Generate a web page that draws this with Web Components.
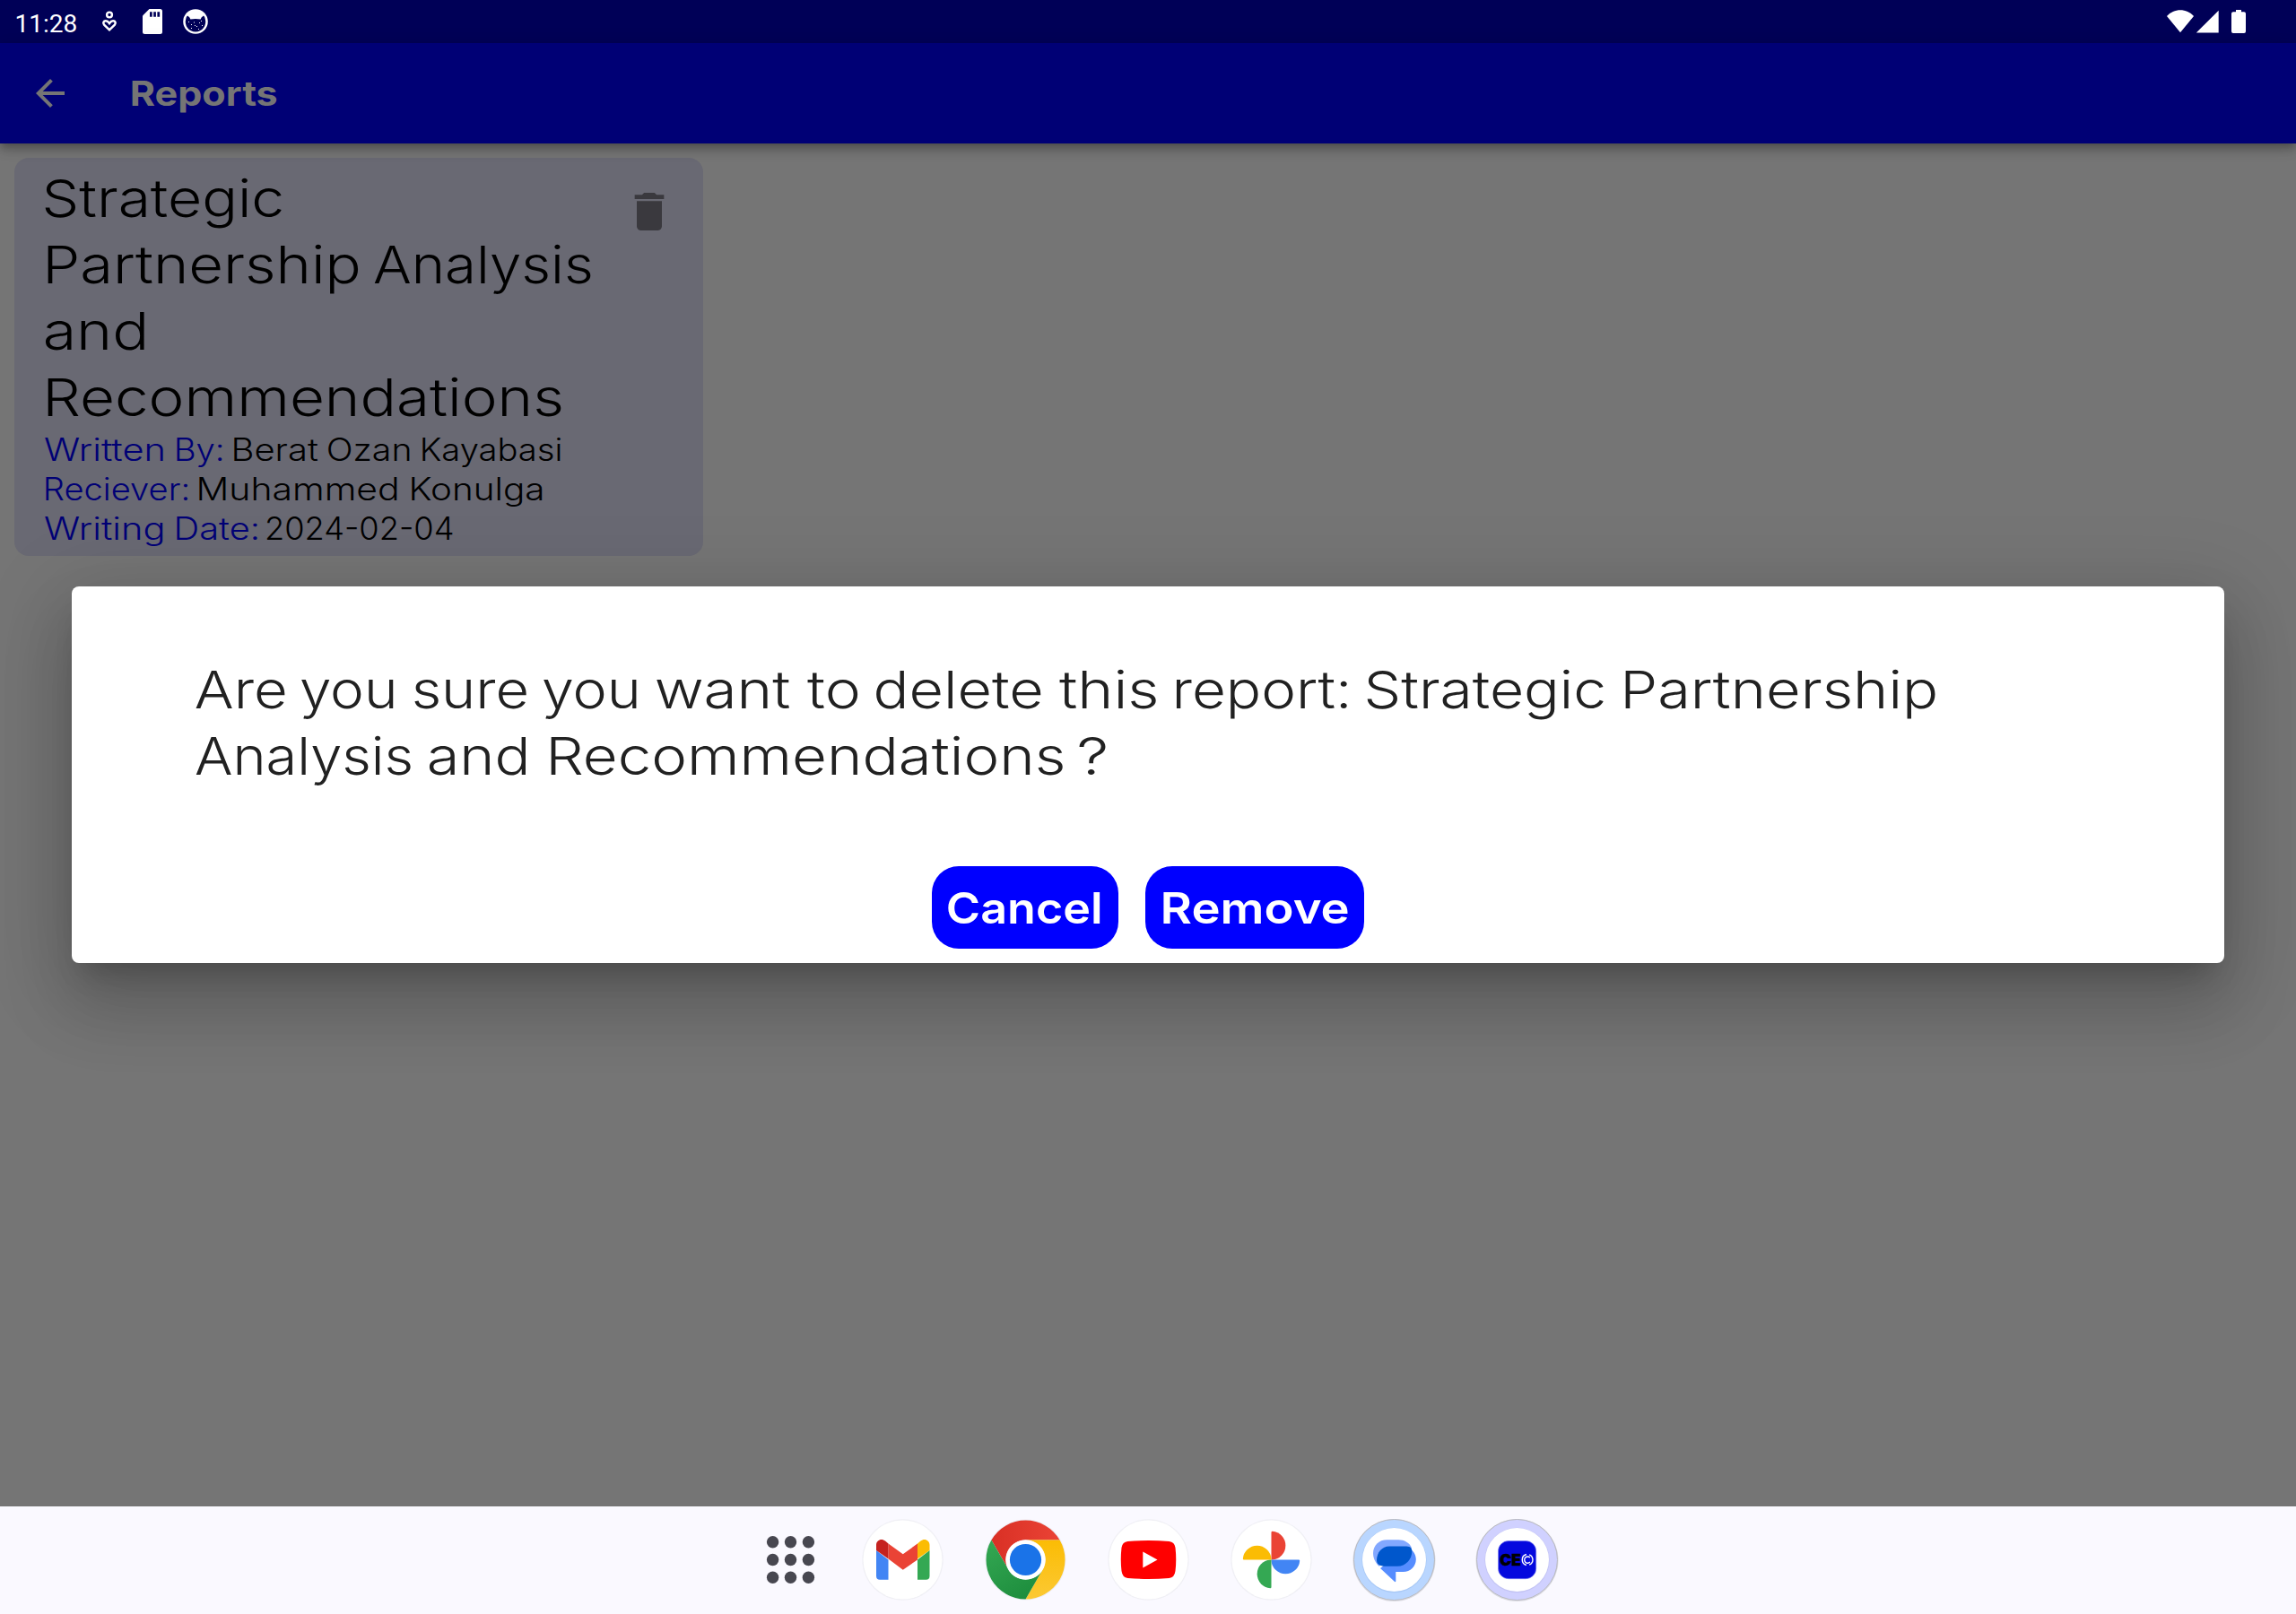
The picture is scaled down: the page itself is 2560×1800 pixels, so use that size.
<!DOCTYPE html>
<html lang="en">
<head>
<meta charset="utf-8">
<title>Reports</title>
<style>
html,body{margin:0;padding:0;width:2560px;height:1800px;overflow:hidden;background:#757575}
</style>
</head>
<body>
<tablet-screen></tablet-screen>
<script>
const define=(name,html,setup)=>customElements.define(name,class extends HTMLElement{
  constructor(){super();this.attachShadow({mode:'open'}).innerHTML=html;}
  connectedCallback(){if(setup)setup(this,this.shadowRoot);}
});

/* A line of words; each word is stretched to its own start and end offset. */
const ctx=document.createElement('canvas').getContext('2d');
customElements.define('fit-line',class extends HTMLElement{
  connectedCallback(){
    const root=this.shadowRoot||this.attachShadow({mode:'open'});
    const a=n=>this.getAttribute(n);
    const size=+a('size'),weight=a('weight')||400,height=+a('height'),shift=+(a('shift')||0);
    const words=a('text').split(' '),labels=+(a('labels')||0);
    const e=a('edges').split(' ').map((v,i)=>i%2?v-.4:v-1);
    ctx.font=`${weight} ${size}px Inter`;
    let out=`<style>:host{display:flex;height:${height}px;font:${weight} ${size}px/${height}px Inter,sans-serif;padding-left:${e[0]}px;box-sizing:border-box}
    .w{display:block;flex:none;white-space:pre}.t{display:inline-block;transform-origin:0 0}.s{font-size:0}.label{color:var(--label)}</style>`;
    words.forEach((w,i)=>{
      const L=e[2*i],R=e[2*i+1],m=ctx.measureText(w);
      const s=(R-L)/(m.actualBoundingBoxRight+m.actualBoundingBoxLeft);
      const last=i===words.length-1,next=last?R:e[2*i+2];
      out+=`<span class="w${i<labels?' label':''}" style="width:${(next-L).toFixed(2)}px"><span class="t" style="transform:translate(${(s*m.actualBoundingBoxLeft).toFixed(2)}px,${shift}px) scaleX(${s.toFixed(4)})">${w}</span>${last?'':'<span class="s"> </span>'}</span>`;
    });
    root.innerHTML=out;
  }
});

define('status-bar',`<style>
:host{display:flex;height:48px;background:#000057;color:#fff;align-items:center;box-sizing:border-box;justify-content:space-between}
svg{display:block}
.l{display:flex;align-items:center;padding-left:16.5px}
.time{font:400 28px/48px Roboto,sans-serif;width:91.500px;padding-top:3px;height:45px}
</style>
<div class="l"><span class="time">11:28</span>
<svg width="130" height="48" viewBox="108 0 130 48">
 <circle cx="122" cy="16.500" r="2.900" fill="none" stroke="#fff" stroke-width="2.400"/>
 <path d="M122 33.300l-5.900-5.600c-1.700-1.900-.6-4.500 1.800-4.500 1.700 0 2.900 1.100 4.100 2.800 1.200-1.700 2.400-2.800 4.100-2.800 2.400 0 3.500 2.600 1.800 4.500z" fill="none" stroke="#fff" stroke-width="2.500"/>
 <path d="M166.500 10H178.500a2.500 2.500 0 0 1 2.500 2.500V35.500a2.500 2.500 0 0 1-2.500 2.500H161.500a2.500 2.500 0 0 1-2.500-2.500V17.500z" fill="#fff"/>
 <path d="M167 13.300h2.700v5.400h-2.700zM171.200 13.300h2.700v5.400h-2.700zM175.400 13.300h2.700v5.400h-2.700z" fill="#000057"/>
 <circle cx="218" cy="24" r="13.800" fill="#fff"/>
 <path d="M207.300 21q.2-2.500 1.700-3.600 2.800 1.500 3.400 4 5.500-1 11.200 0 .6-2.500 3.400-4 1.500 1.100 1.700 3.600a11.200 11.200 0 1 1-21.400 0z" fill="#000057"/>
 <path d="M210 24h1v1h-1zM213 27h1v1h-1zM216 24.500h1v1h-1zM219 29h1v1h-1zM222 25h1v1h-1zM225 28h1v1h-1zM213 31h1v1h-1zM221 32h1v1h-1zM217 28h1v1h-1zM224 23h1v1h-1z" fill="#fff"/>
</svg></div>
<svg width="150" height="48" viewBox="2410 0 150 48" fill="#fff">
 <path d="M2431 36.300L2416 18.100c7.800-9 22.200-9 30 0z"/><path d="M2448.800 36.600L2473.700 11.800V36.600z"/>
 <path d="M2493 11h6v2.200h3q2 0 2 2V35q0 2-2 2h-12q-2 0-2-2V15.200q0-2 2-2h3z"/>
</svg>`);

define('app-bar',`<style>
:host{display:flex;height:112px;background:#000075;color:#757575;align-items:center;box-sizing:border-box;padding-left:32px;z-index:1;
box-shadow:0 4px 8px -2px rgba(0,0,0,.2),0 8px 10px 0 rgba(0,0,0,.14),0 2px 20px 0 rgba(0,0,0,.12)}
svg{display:block;flex:none}fit-line{flex:none}
</style>
<svg width="48" height="48" viewBox="0 0 24 24" fill="currentColor"><path d="M20 11H7.830l5.590-5.590L12 4l-8 8 8 8 1.410-1.410L7.830 13H20v-2z"/></svg>
<fit-line text="Reports" edges="67.500 229" size="38.500" weight="700" height="50"></fit-line>`);

define('report-card',`<style>
:host{display:flex;width:768px;height:444px;box-sizing:border-box;border-radius:16px;background:#696973;color:#000;padding:8px 32px 8px 0;--label:#000075}
.text{flex:1;min-width:0}.del{flex:none;padding-top:24px}svg{display:block;fill:#3a393e}
</style>
<div class="text">
<fit-line text="Strategic" edges="34.500 298.500" size="57.800" weight="320" height="74"></fit-line>
<fit-line text="Partnership Analysis" edges="37.500 383.500 402.300 643.300" size="57.800" weight="320" height="74"></fit-line>
<fit-line text="and" edges="34.500 144.500" size="57.800" weight="320" height="74"></fit-line>
<fit-line text="Recommendations" edges="37.500 609.500" size="57.800" weight="320" height="74"></fit-line>
<fit-line text="Written By: Berat Ozan Kayabasi" labels="2" edges="33.500 166 181.500 231.500 246.200 339 350.800 441 456.500 610" size="34.700" weight="340" height="44" shift="-1.500"></fit-line>
<fit-line text="Reciever: Muhammed Konulga" labels="1" edges="35.500 193 206.500 426.200 443.500 589" size="34.700" weight="340" height="44" shift="-1.500"></fit-line>
<fit-line text="Writing Date: 2024-02-04" labels="2" edges="33.500 165 181.500 270.700 282 489" size="34.700" weight="340" height="44" shift="-1.500"></fit-line>
</div>
<div class="del"><svg width="56" height="56" viewBox="0 0 24 24"><path d="M6 19c0 1.100.9 2 2 2h8c1.100 0 2-.9 2-2V7H6v12zM19 4h-3.500l-1-1h-5l-1 1H5v2h14V4z"/></svg></div>`);

define('dialog-button',`<style>
:host{display:flex;height:92px;background:#00f;color:#fff;border-radius:30px;align-items:center;box-sizing:border-box}
</style><slot></slot>`);

define('confirm-dialog',`<style>
:host{display:block;width:2400px;height:420px;box-sizing:border-box;background:#fff;border-radius:8px;color:#212121;padding-top:78px;
box-shadow:0 22px 30px -14px rgba(0,0,0,.2),0 48px 76px 6px rgba(0,0,0,.14),0 18px 92px 16px rgba(0,0,0,.12)}
.row{display:flex;gap:30px;padding:86px 0 0 959px}
</style>
<fit-line text="Are you sure you want to delete this report: Strategic Partnership" edges="138.600 238 256 359.400 383.300 508 526 630.700 653.300 801.800 821 877.500 898.500 1081.700 1101.600 1209.200 1231.800 1422.900 1445 1708.800 1732.700 2078" size="57.800" weight="320" height="74"></fit-line>
<fit-line text="Analysis and Recommendations ?" edges="138.600 378 398.600 506 535.200 1105.600 1124 1153" size="57.800" weight="320" height="74"></fit-line>
<div class="row">
<dialog-button style="width:208px"><fit-line text="Cancel" edges="18.500 187.700" size="48.100" weight="600" height="60" shift=".7"></fit-line></dialog-button>
<dialog-button style="width:244px"><fit-line text="Remove" edges="20.500 226" size="48.100" weight="600" height="60" shift=".7"></fit-line></dialog-button>
</div>`);

define('dock-bar',`<style>
:host{display:flex;height:120px;background:#faf9ff;box-sizing:border-box;padding-left:825px;z-index:2}
svg{display:block;flex:none;overflow:visible}
</style>
<svg width="113" height="120" viewBox="-56.500 -60 113 120" fill="#474750">
<circle cx="-19.900" cy="-20.300" r="6.700"/><circle cx="0" cy="-20.300" r="6.700"/><circle cx="19.900" cy="-20.300" r="6.700"/>
<circle cx="-19.900" cy="-.5" r="6.700"/><circle cx="0" cy="-.5" r="6.700"/><circle cx="19.900" cy="-.5" r="6.700"/>
<circle cx="-19.900" cy="19.300" r="6.700"/><circle cx="0" cy="19.300" r="6.700"/><circle cx="19.900" cy="19.300" r="6.700"/></svg>

<svg width="137" height="120" viewBox="-68.500 -59.500 137 120"><circle r="45.200" fill="#ededf3" opacity=".8"/><circle r="44" fill="#fff"/>
<path d="M-29.500-10.500L-16 0V22.300H-25.500q-4 0-4-4z" fill="#4285f4"/><path d="M30-10.500L16.500 0V22.300H26q4 0 4-4z" fill="#34a853"/>
<path d="M-16-18L.25-6.200 16.500-18V0L.25 11.200-16-1z" fill="#ea4335"/>
<path d="M-29.500-10.500v-6c0-5.500 6-8 10-4.500l3.500 3V-1z" fill="#c5221f"/><path d="M30-10.500v-6c0-5.500-6-8-10-4.500l-3.500 3V-1z" fill="#fbbc04"/></svg>

<svg width="137" height="120" viewBox="-68.500 -59.500 137 120">
<defs><linearGradient id="r"><stop offset="0" stop-color="#d93025"/><stop offset="1" stop-color="#ea4335"/></linearGradient>
<linearGradient id="y" x1="0" y1="1" x2="0" y2="0"><stop offset="0" stop-color="#fcc934"/><stop offset="1" stop-color="#fbbc04"/></linearGradient>
<linearGradient id="g" x1="0" y1="0" x2=".6" y2="1"><stop offset="0" stop-color="#34a853"/><stop offset="1" stop-color="#1e8e3e"/></linearGradient></defs>
<circle r="45" fill="#ededf3"/>
<path d="M-38.100-22A44 44 0 0 1 38.100-22H0A22 22 0 0 0-19.050 11z" fill="url(#r)"/>
<path d="M38.100-22A44 44 0 0 1 0 44L19.050 11A22 22 0 0 0 0-22z" fill="url(#y)"/>
<path d="M0 44A44 44 0 0 1-38.100-22L-19.050 11A22 22 0 0 0 19.050 11z" fill="url(#g)"/>
<circle r="22.200" fill="#fff"/><circle r="17.600" fill="#1a73e8"/></svg>

<svg width="137" height="120" viewBox="-68.500 -59.500 137 120"><circle r="45.200" fill="#ededf3" opacity=".8"/><circle r="44" fill="#fff"/>
<path d="M-23-20.500Q0-22.500 23-20.500 29-20 30-13.500 31.500 0 30 12.500 29 20 23 20.500 0 22.500-23 20.500-29 20-30 12.500-31.500 0-30-13.500-29-20-23-20.500z" fill="red"/>
<path d="M-6.200-9L10 0-6.200 9z" fill="#fff"/></svg>

<svg width="137" height="120" viewBox="-68.500 -59.500 137 120"><circle r="45.200" fill="#ededf3" opacity=".8"/><circle r="44" fill="#fff"/>
<path d="M0 0V-30.500q0-1.200 1.200-1.200A15.900 15.900 0 0 1 1.200 0z" fill="#ea4335"/>
<path d="M0 0H30.500q1.200 0 1.200 1.200A15.900 15.900 0 0 1 0 1.200z" fill="#4285f4"/>
<path d="M0 0V30.500q0 1.200-1.200 1.200A15.900 15.900 0 0 1-1.200 0z" fill="#34a853"/>
<path d="M0 0H-30.500q-1.200 0-1.200-1.200A15.900 15.900 0 0 1 0-1.200z" fill="#fbbc04"/></svg>

<svg width="137" height="120" viewBox="-68.500 -59.500 137 120"><circle cy=".5" r="46" fill="#dcdce2"/><circle r="45" fill="#b9d6ff" stroke="#b9bac0" stroke-width="1"/><circle r="36.200" cy=".5" fill="#a9c9f6"/><circle r="35.500" fill="#fff"/>
<path d="M16-13.500c5 3 8.300 7.500 8.300 13 0 8-6.300 14-14.300 14H1.800V23.500q0 2-1.500.8L-15.500 9.500Z" fill="#568dff"/>
<path d="M-8-22.300H5C11-22.300 17.500-19 19.500-13L-17 7.300C-21 3-23.500-1.500-23.500-7.500-23.500-16-17-22.300-8-22.300z" fill="#83a8ff"/>
<path d="M-5.500-15H12C17-15 19.800-14 19.800-9.500 19.800-.5 13 7.300 3.500 7.300H-10C-16 7.300-19.500 5-19.500 .5-19.500-8-13.500-15-5.500-15z" fill="#0057cc"/></svg>

<svg width="137" height="120" viewBox="-68.500 -59.500 137 120"><circle cy=".5" r="46" fill="#dcdce2"/><circle r="45" fill="#d0d1ff" stroke="#b9bac0" stroke-width="1"/><circle r="36.200" cy=".5" fill="#c3c4f4"/><circle r="35.500" fill="#fff"/>
<rect x="-21" y="-21" width="42.200" height="42.200" rx="11.500" fill="#0509de" stroke="#7b7ff0" stroke-width=".6"/>
<text x="-19.200" y="6.300" font-family="Inter,sans-serif" font-weight="900" font-size="17.400" textLength="23.500" lengthAdjust="spacingAndGlyphs" fill="#000" stroke="#000" stroke-width=".5">CE</text>
<path d="M10.400-6A6.200 6.200 0 0 0 10.400 6M13.700-5.700A6.200 6.200 0 0 1 13.700 5.700M14.400-2.400A3.600 3.600 0 1 0 14.400 2.600" fill="none" stroke="#fff" stroke-width="1.400"/></svg>`);

define('tablet-screen',`<style>
:host{display:flex;flex-direction:column;width:2560px;height:1800px;background:#757575;overflow:hidden}
app-bar{position:relative}
main{flex:1;min-height:0;box-sizing:border-box;padding:16px 0 0 16px}
confirm-dialog{margin:34px 0 0 64px}
dock-bar{position:relative}
</style>
<status-bar></status-bar><app-bar></app-bar>
<main><report-card></report-card><confirm-dialog></confirm-dialog></main>
<dock-bar></dock-bar>`);
</script>
</body>
</html>
